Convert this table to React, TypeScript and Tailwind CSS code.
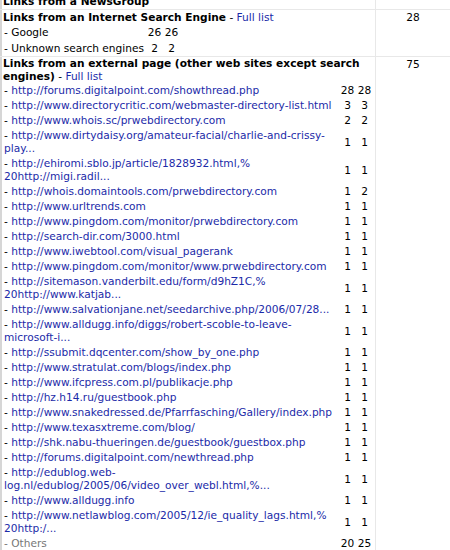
import React from 'react'

const engines: [string, number, number][] = [
  ['- Google', 26, 26],
  ['- Unknown search engines', 2, 2],
]

const links: { lines: string[]; a: number; b: number }[] = [
  { lines: ['http://forums.digitalpoint.com/showthread.php'], a: 28, b: 28 },
  { lines: ['http://www.directorycritic.com/webmaster-directory-list.html'], a: 3, b: 3 },
  { lines: ['http://www.whois.sc/prwebdirectory.com'], a: 2, b: 2 },
  { lines: ['http://www.dirtydaisy.org/amateur-facial/charlie-and-crissy-', 'play...'], a: 1, b: 1 },
  { lines: ['http://ehiromi.sblo.jp/article/1828932.html,%', '20http://migi.radil...'], a: 1, b: 1 },
  { lines: ['http://whois.domaintools.com/prwebdirectory.com'], a: 1, b: 2 },
  { lines: ['http://www.urltrends.com'], a: 1, b: 1 },
  { lines: ['http://www.pingdom.com/monitor/prwebdirectory.com'], a: 1, b: 1 },
  { lines: ['http://search-dir.com/3000.html'], a: 1, b: 1 },
  { lines: ['http://www.iwebtool.com/visual_pagerank'], a: 1, b: 1 },
  { lines: ['http://www.pingdom.com/monitor/www.prwebdirectory.com'], a: 1, b: 1 },
  { lines: ['http://sitemason.vanderbilt.edu/form/d9hZ1C,%', '20http://www.katjab...'], a: 1, b: 1 },
  { lines: ['http://www.salvationjane.net/seedarchive.php/2006/07/28...'], a: 1, b: 1 },
  { lines: ['http://www.alldugg.info/diggs/robert-scoble-to-leave-', 'microsoft-i...'], a: 1, b: 1 },
  { lines: ['http://ssubmit.dqcenter.com/show_by_one.php'], a: 1, b: 1 },
  { lines: ['http://www.stratulat.com/blogs/index.php'], a: 1, b: 1 },
  { lines: ['http://www.ifcpress.com.pl/publikacje.php'], a: 1, b: 1 },
  { lines: ['http://hz.h14.ru/guestbook.php'], a: 1, b: 1 },
  { lines: ['http://www.snakedressed.de/Pfarrfasching/Gallery/index.php'], a: 1, b: 1 },
  { lines: ['http://www.texasxtreme.com/blog/'], a: 1, b: 1 },
  { lines: ['http://shk.nabu-thueringen.de/guestbook/guestbox.php'], a: 1, b: 1 },
  { lines: ['http://forums.digitalpoint.com/newthread.php'], a: 1, b: 1 },
  { lines: ['http://edublog.web-', 'log.nl/edublog/2005/06/video_over_webl.html,%...'], a: 1, b: 1 },
  { lines: ['http://www.alldugg.info'], a: 1, b: 1 },
  { lines: ['http://www.netlawblog.com/2005/12/ie_quality_lags.html,%', '20http:/...'], a: 1, b: 1 },
]

const Row = ({ children, total }: { children: React.ReactNode; total?: number }) => (
  <div className="flex border-b border-[#e8e8e8]">
    <div className="w-[375px] shrink-0 border-l-2 border-[#d6d6d6] pl-[1px]">{children}</div>
    <div className="flex-1 border-l border-[#e8e8e8] pt-[1px] text-center">{total}</div>
  </div>
)

const FullList = () => <a className="text-[#1b2aa8]">Full list</a>

export default function App() {
  return (
    <div className="w-[450px] h-[550px] overflow-hidden bg-white text-[10.6px] leading-[13px] text-black font-['DejaVu_Sans',Verdana,sans-serif]">
      <div className="-mt-[6px]">
        <Row>
          <div className="py-[1px] font-bold whitespace-nowrap">Links from a NewsGroup</div>
        </Row>

        <Row total={28}>
          <div className="pt-[1px] whitespace-nowrap">
            <b>Links from an Internet Search Engine</b> - <FullList />
          </div>
          <div className="grid grid-cols-[142px_17px_17px] pl-[1px]">
            {engines.map(([name, a, b]) => (
              <React.Fragment key={name}>
                <div className="h-[16px] flex items-center whitespace-nowrap">{name}</div>
                <div className="h-[16px] flex items-center justify-center">{a}</div>
                <div className="h-[16px] flex items-center justify-center">{b}</div>
              </React.Fragment>
            ))}
          </div>
        </Row>

        <Row total={75}>
          <div className="whitespace-nowrap">
            <b>Links from an external page (other web sites except search</b>
            <br />
            <b>engines)</b> - <FullList />
          </div>
          <div className="grid grid-cols-[335px_17px_17px] pl-[1px]">
            {links.map((l, i) => (
              <React.Fragment key={i}>
                <div className="py-[1px] whitespace-nowrap">
                  - <a className="text-[#1b2aa8]">{l.lines[0]}</a>
                  {l.lines[1] && (
                    <>
                      <br />
                      <a className="text-[#1b2aa8]">{l.lines[1]}</a>
                    </>
                  )}
                </div>
                <div className="flex items-center justify-center">{l.a}</div>
                <div className="flex items-center justify-center">{l.b}</div>
              </React.Fragment>
            ))}
            <div className="py-[1px] text-[#777]">- Others</div>
            <div className="flex items-center justify-center">20</div>
            <div className="flex items-center justify-center">25</div>
          </div>
        </Row>
      </div>
    </div>
  )
}
